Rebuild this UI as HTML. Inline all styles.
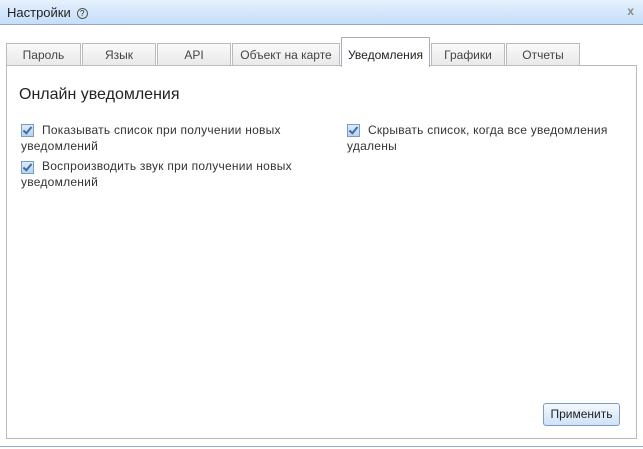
<!DOCTYPE html><html><head><meta charset="utf-8"><style>
body{margin:0;width:643px;height:449px;background:#fff;font-family:"Liberation Sans",sans-serif;font-size:12px;color:#333;position:relative;overflow:hidden}
.title{position:absolute;left:0;top:0;width:643px;height:24px;background:linear-gradient(#e6f1fd,#c5defa);border-bottom:1px solid #8fa9c6}
.tt{position:absolute;left:7px;top:5px;font-size:13px;color:#222}
.q{display:inline-block;width:9px;height:9px;border:1px solid #555;border-radius:50%;font-size:8px;line-height:9px;text-align:center;margin-left:6px;vertical-align:1px}
.x{position:absolute;right:9px;top:4px;color:#888;font-size:12px;font-weight:bold}
.tab{position:absolute;top:43px;height:22px;background:linear-gradient(#fafafa,#e8e8e8);border:1px solid #bbb;border-bottom:none;text-align:center;line-height:23px;color:#444}
.tab.a{top:37px;height:29px;background:#fff;border-color:#aab;line-height:34px;color:#222;z-index:2}
.panel{position:absolute;left:6px;top:65px;width:629px;height:372px;border:1px solid #bbb}
.h{position:absolute;left:19px;top:86px;font-size:16px;color:#222}
.cb{position:absolute;width:11px;height:11px;border:1px solid #7a9cc0;background:linear-gradient(#dcebfb,#b8d3ee)}
.cb:after{content:"";position:absolute;left:3px;top:0px;width:3px;height:7px;border:solid #3a6da6;border-width:0 2px 2px 0;transform:rotate(40deg)}
.t{position:absolute;line-height:16px;color:#333;letter-spacing:0.25px}
.btn{position:absolute;left:543px;top:403px;width:75px;height:21px;border:1px solid #7d9dc0;border-radius:3px;background:linear-gradient(#f4f9ff,#cfe2f7);text-align:center;line-height:21px;color:#222}
.bl{position:absolute;left:0;top:446px;width:643px;height:1px;background:#8fb0d0}
</style></head><body>
<div class="title"><div class="tt">Настройки<span class="q">?</span></div><div class="x">x</div></div>
<div class="tab" style="left:6px;width:73px">Пароль</div>
<div class="tab" style="left:82px;width:72px">Язык</div>
<div class="tab" style="left:157px;width:72px">API</div>
<div class="tab" style="left:232px;width:106px">Объект на карте</div>
<div class="tab a" style="left:341px;width:87px">Уведомления</div>
<div class="tab" style="left:431px;width:72px">Графики</div>
<div class="tab" style="left:506px;width:72px">Отчеты</div>
<div class="panel"></div>
<div class="h">Онлайн уведомления</div>
<div class="cb" style="left:21px;top:124px"></div>
<div class="t" style="left:21px;top:122px;width:285px;text-indent:21px">Показывать список при получении новых уведомлений</div>
<div class="cb" style="left:21px;top:161px"></div>
<div class="t" style="left:21px;top:158px;width:295px;text-indent:21px">Воспроизводить звук при получении новых уведомлений</div>
<div class="cb" style="left:347px;top:124px"></div>
<div class="t" style="left:347px;top:122px;width:285px;text-indent:21px">Скрывать список, когда все уведомления удалены</div>
<div class="btn">Применить</div>
<div class="bl"></div>
</body></html>
